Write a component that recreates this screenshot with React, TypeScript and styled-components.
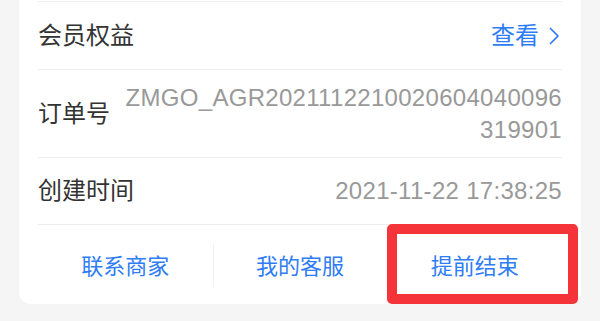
import React from "react";
import styled, { createGlobalStyle } from "styled-components";

const Global = createGlobalStyle`
  html, body { margin: 0; padding: 0; background: #f5f5f5; overflow: hidden; }
  body { font-family: "Liberation Sans", "Noto Sans CJK SC", sans-serif; }
`;

const Page = styled.div`
  width: 600px;
  height: 321px;
  padding: 0 19px;
  box-sizing: border-box;
  background: #f5f5f5;
`;

const Card = styled.div`
  background: #ffffff;
  border-radius: 0 0 12px 12px;
  padding-top: 1px;
  position: relative;
`;

const Row = styled.div<{ $h: number }>`
  margin: 0 19px;
  min-height: ${(p) => p.$h}px;
  border-top: 1px solid #ededed;
  display: flex;
  align-items: center;
  justify-content: space-between;
  box-sizing: border-box;
`;

const Label = styled.div`
  font-size: 24px;
  color: #333333;
  flex-shrink: 0;
  line-height: 32px;
`;

const Value = styled.div`
  flex: 1;
  margin-left: 15px;
  font-size: 24px;
  letter-spacing: 0.3px;
  line-height: 32px;
  color: #999999;
  text-align: right;
  word-break: break-all;
`;

const Link = styled.div`
  display: flex;
  align-items: center;
  gap: 10px;
  font-size: 24px;
  color: #2e7cf6;
  line-height: 32px;
  padding-right: 2px;
`;

const Actions = styled.div`
  margin: 0 19px;
  border-top: 1px solid #ededed;
  display: grid;
  grid-template-columns: repeat(3, 1fr);
  height: 79px;
`;

const Action = styled.div<{ $sep?: boolean }>`
  position: relative;
  display: flex;
  align-items: center;
  justify-content: center;
  font-size: 22px;
  color: #2e7cf6;
  padding-bottom: 2px;
  &::before {
    content: "";
    display: ${(p) => (p.$sep ? "block" : "none")};
    position: absolute;
    left: 0;
    top: 18px;
    height: 44px;
    width: 1px;
    background: #f2f2f2;
  }
`;

const Highlight = styled.div`
  position: absolute;
  left: 0;
  top: -1px;
  width: 191px;
  height: 80px;
  border: 10px solid #f43438;
  border-radius: 5px;
  box-sizing: border-box;
`;

const Chevron = () => (
  <svg width="11" height="18" viewBox="0 0 11 18" fill="none">
    <path d="M1.5 1.5 L9 9 L1.5 16.5" stroke="#2e7cf6" strokeWidth="1.7" strokeLinecap="round" strokeLinejoin="round" />
  </svg>
);

export default function App() {
  return (
    <>
      <Global />
      <Page>
        <Card>
          <Row $h={68}>
            <Label>会员权益</Label>
            <Link>
              查看
              <Chevron />
            </Link>
          </Row>
          <Row $h={88}>
            <Label>订单号</Label>
            <Value>ZMGO_AGR2021112210020604040096319901</Value>
          </Row>
          <Row $h={67}>
            <Label>创建时间</Label>
            <Value>2021-11-22 17:38:25</Value>
          </Row>
          <Actions>
            <Action>联系商家</Action>
            <Action $sep>我的客服</Action>
            <Action $sep>
              提前结束
              <Highlight />
            </Action>
          </Actions>
        </Card>
      </Page>
    </>
  );
}
